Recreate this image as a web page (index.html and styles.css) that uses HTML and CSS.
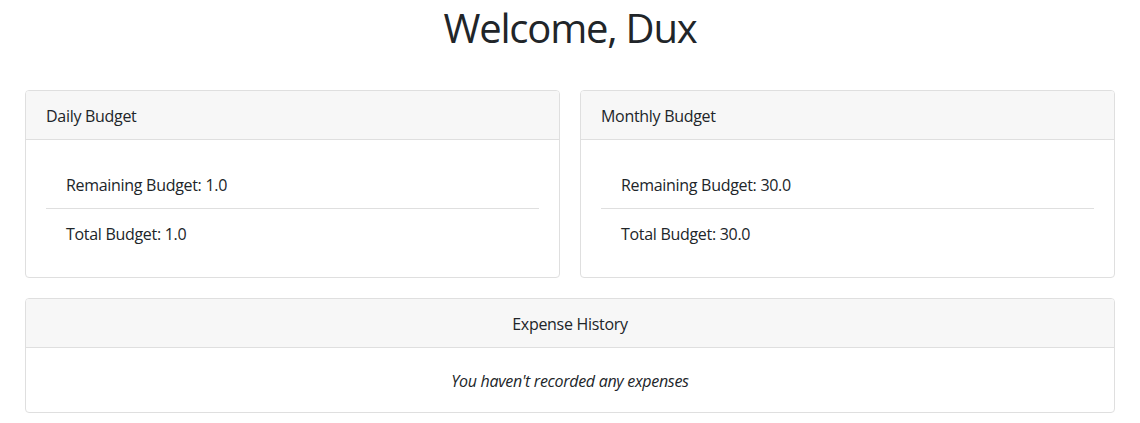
FILE: index.html
```html
<!DOCTYPE html>
<html lang="en">
<head>
<meta charset="utf-8">
<title>Dashboard</title>
<link rel="stylesheet" href="styles.css">
</head>
<body>
<main class="page">
  <h1 class="title">Welcome, Dux</h1>
  <div class="budgets">
    <section class="card">
      <header class="card-header">Daily Budget</header>
      <div class="card-body">
        <ul class="list">
          <li class="list-item">Remaining Budget: 1.0</li>
          <li class="list-item">Total Budget: 1.0</li>
        </ul>
      </div>
    </section>
    <section class="card">
      <header class="card-header">Monthly Budget</header>
      <div class="card-body">
        <ul class="list">
          <li class="list-item">Remaining Budget: 30.0</li>
          <li class="list-item">Total Budget: 30.0</li>
        </ul>
      </div>
    </section>
  </div>
  <section class="card history">
    <header class="card-header centered">Expense History</header>
    <div class="card-body centered">
      <em class="empty">You haven't recorded any expenses</em>
    </div>
  </section>
</main>
</body>
</html>
```

FILE: styles.css
```css
* { box-sizing: border-box; }
html, body { margin: 0; padding: 0; background: #fff; }
body {
  font-family: "Open Sans", "Noto Sans", sans-serif;
  font-size: 16px;
  line-height: 24px;
  letter-spacing: -0.3px;
  color: #212529;
}
.page {
  padding: 0 25px;
  display: flex;
  flex-direction: column;
  gap: 20px;
}
.title {
  margin: 0 0 18px;
  padding-top: 4px;
  font-size: 40px;
  line-height: 48px;
  font-weight: 400;
  letter-spacing: -1.2px;
  text-align: center;
}
.budgets {
  display: grid;
  grid-template-columns: 1fr 1fr;
  gap: 20px;
}
.card {
  border: 1px solid #dfdfdf;
  border-radius: 4px;
  background: #fff;
  overflow: hidden;
}
.card-header {
  background: #f7f7f7;
  border-bottom: 1px solid #dfdfdf;
  padding: 13px 20px 11px;
}
.card-body { padding: 20px; }
.centered { text-align: center; }
.list { list-style: none; margin: 0; padding: 0; }
.list-item { padding: 13px 20px 11px; }
.list-item + .list-item { border-top: 1px solid #dfdfdf; }
.empty { font-style: italic; display: inline-block; padding-top: 1px; }
.history .card-body { padding: 20px 20px 19px; }
```
